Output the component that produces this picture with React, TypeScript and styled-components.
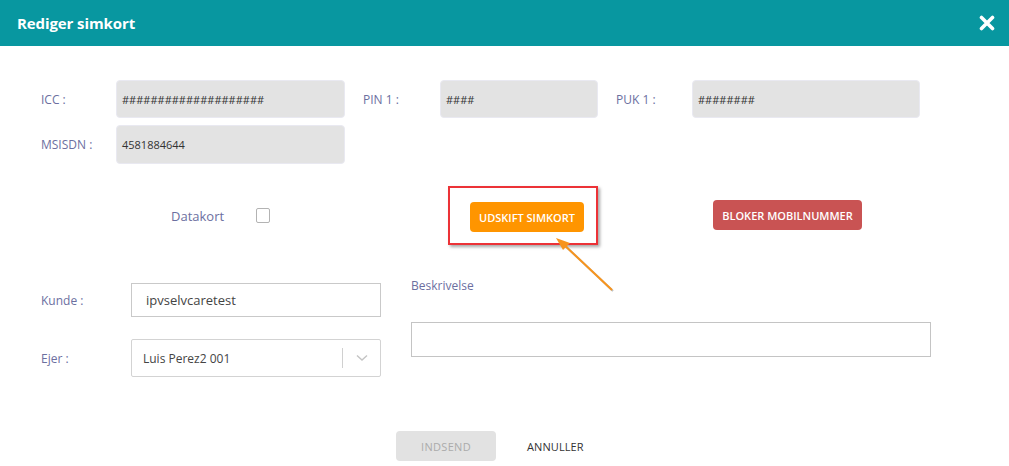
import React from "react";
import styled, { createGlobalStyle } from "styled-components";

const Global = createGlobalStyle`
  html, body { margin: 0; padding: 0; background: #fff; }
  body { font-family: "Open Sans", "Noto Sans", Arial, sans-serif; }
  * { box-sizing: border-box; }
`;

const Page = styled.div`
  position: relative;
  width: 1009px;
  height: 466px;
  background: #fff;
`;

const Header = styled.header`
  height: 46px;
  background: #0897a0;
  display: flex;
  align-items: center;
  justify-content: space-between;
  padding: 0 14px 0 17px;
`;

const Title = styled.h1`
  margin: 0;
  font-size: 15px;
  font-weight: 700;
  color: #fff;
  letter-spacing: -0.1px;
`;

const CloseBtn = styled.button`
  border: 0;
  background: transparent;
  padding: 0;
  width: 16px;
  height: 16px;
  display: flex;
  cursor: pointer;
`;

const Body = styled.div`
  padding: 34px 0 0 41px;
`;

const Row = styled.div<{ $mt?: number; $h: number }>`
  display: flex;
  align-items: center;
  height: ${(p) => p.$h}px;
  margin-top: ${(p) => p.$mt ?? 0}px;
`;

const Label = styled.label<{ $w: number; $ml?: number }>`
  width: ${(p) => p.$w}px;
  margin-left: ${(p) => p.$ml ?? 0}px;
  flex: none;
  font-size: 12px;
  color: #6c6f9f;
`;

const ReadField = styled.div<{ $w: number }>`
  width: ${(p) => p.$w}px;
  height: 100%;
  flex: none;
  background: #e3e3e3;
  border: 1px solid #e9e9f1;
  border-radius: 4px;
  display: flex;
  align-items: center;
  padding-left: 5px;
  font-size: 11px;
  color: #333;
`;

const ActionRow = styled.div`
  display: flex;
  align-items: center;
  height: 59px;
  margin-top: 22px;
  padding-left: 130px;
`;

const CheckLabel = styled.span`
  font-size: 13px;
  color: #6c6f9f;
  width: 85px;
  flex: none;
`;

const Checkbox = styled.span`
  width: 14px;
  height: 15px;
  border: 1px solid #b3b3b3;
  border-radius: 2px;
  background: #fff;
  flex: none;
`;

const Highlight = styled.div`
  margin-left: 178px;
  height: 59px;
  width: 150px;
  border: 2px solid #ec3237;
  box-shadow: 2px 2px 3px rgba(0, 0, 0, 0.35);
  padding: 14px 0 0 20px;
`;

const ActionButton = styled.button<{ $bg: string; $w: number }>`
  width: ${(p) => p.$w}px;
  height: 30px;
  border: 0;
  border-radius: 4px;
  background: ${(p) => p.$bg};
  color: #fff;
  font-family: "Open Sans", Arial, sans-serif;
  font-size: 11px;
  font-weight: 600;
  text-transform: uppercase;
  padding: 0;
  cursor: pointer;
`;

const RedButton = styled(ActionButton)`
  margin-left: 115px;
  margin-top: -1px;
`;

const Lower = styled.div`
  display: flex;
  margin-top: 38px;
`;

const LeftCol = styled.div`
  display: flex;
  flex-direction: column;
  width: 370px;
  flex: none;
`;

const TextInput = styled.div`
  width: 250px;
  height: 34px;
  border: 1px solid #c9c9c9;
  display: flex;
  align-items: center;
  padding-left: 14px;
  font-size: 13px;
  color: #444;
  flex: none;
`;

const Select = styled.div`
  width: 250px;
  height: 38px;
  border: 1px solid #d3d3d3;
  border-radius: 2px;
  display: flex;
  align-items: center;
  padding-left: 11px;
  font-size: 12px;
  color: #444;
  flex: none;
`;

const SelectValue = styled.span`
  flex: 1;
`;

const SelectDivider = styled.span`
  width: 1px;
  height: 20px;
  background: #d0d0d0;
`;

const SelectArrow = styled.span`
  width: 37px;
  display: flex;
  justify-content: center;
`;

const RightCol = styled.div`
  display: flex;
  flex-direction: column;
`;

const TopLabel = styled.div`
  font-size: 12px;
  color: #6c6f9f;
  height: 16px;
  margin-top: -6px;
`;

const TextArea = styled.div`
  margin-top: 29px;
  width: 520px;
  height: 35px;
  border: 1px solid #c4c4c4;
`;

const Footer = styled.div`
  display: flex;
  align-items: center;
  margin-top: 54px;
  padding-left: 355px;
`;

const SubmitButton = styled.button`
  width: 100px;
  height: 30px;
  border: 0;
  border-radius: 4px;
  background: #e2e2e2;
  color: #ababab;
  font-family: "Open Sans", Arial, sans-serif;
  font-size: 11px;
  letter-spacing: 0.3px;
  padding: 0;
`;

const CancelButton = styled.button`
  margin-left: 31px;
  border: 0;
  background: transparent;
  padding: 0;
  font-family: "Open Sans", Arial, sans-serif;
  font-size: 11px;
  color: #333;
  letter-spacing: 0.1px;
`;

const Arrow = styled.svg`
  position: absolute;
  left: 540px;
  top: 228px;
  pointer-events: none;
`;

export default function App() {
  return (
    <>
      <Global />
      <Page>
        <Header>
          <Title>Rediger simkort</Title>
          <CloseBtn aria-label="Luk">
            <svg width="16" height="16" viewBox="0 0 16 16">
              <path d="M2.5 2.5 L13.5 13.5 M13.5 2.5 L2.5 13.5" stroke="#fff" strokeWidth="3.6" strokeLinecap="round" />
            </svg>
          </CloseBtn>
        </Header>
        <Body>
          <Row $h={38}>
            <Label $w={75}>ICC :</Label>
            <ReadField $w={229}>####################</ReadField>
            <Label $w={77} $ml={18}>PIN 1 :</Label>
            <ReadField $w={158}>####</ReadField>
            <Label $w={76} $ml={18}>PUK 1 :</Label>
            <ReadField $w={228}>########</ReadField>
          </Row>
          <Row $h={39} $mt={7}>
            <Label $w={75}>MSISDN :</Label>
            <ReadField $w={229}>4581884644</ReadField>
          </Row>
          <ActionRow>
            <CheckLabel>Datakort</CheckLabel>
            <Checkbox />
            <Highlight>
              <ActionButton $bg="#ff9500" $w={114}>Udskift simkort</ActionButton>
            </Highlight>
            <RedButton $bg="#c95353" $w={149}>Bloker mobilnummer</RedButton>
          </ActionRow>
          <Lower>
            <LeftCol>
              <Row $h={34}>
                <Label $w={90}>Kunde :</Label>
                <TextInput>ipvselvcaretest</TextInput>
              </Row>
              <Row $h={38} $mt={22}>
                <Label $w={90}>Ejer :</Label>
                <Select>
                  <SelectValue>Luis Perez2 001</SelectValue>
                  <SelectDivider />
                  <SelectArrow>
                    <svg width="12" height="8" viewBox="0 0 12 8">
                      <path d="M1 1.5 L6 6 L11 1.5" stroke="#c4c4c4" strokeWidth="1.4" fill="none" />
                    </svg>
                  </SelectArrow>
                </Select>
              </Row>
            </LeftCol>
            <RightCol>
              <TopLabel>Beskrivelse</TopLabel>
              <TextArea />
            </RightCol>
          </Lower>
          <Footer>
            <SubmitButton disabled>INDSEND</SubmitButton>
            <CancelButton>ANNULLER</CancelButton>
          </Footer>
        </Body>
        <Arrow width="80" height="70" viewBox="0 0 80 70">
          <line x1="73" y1="63" x2="20" y2="13" stroke="rgba(0,0,0,0.25)" strokeWidth="2" />
          <line x1="72" y1="62" x2="20" y2="13" stroke="#f7941d" strokeWidth="2" />
          <path d="M16 10 L30 15 L23 22 Z" fill="#f7941d" />
        </Arrow>
      </Page>
    </>
  );
}
